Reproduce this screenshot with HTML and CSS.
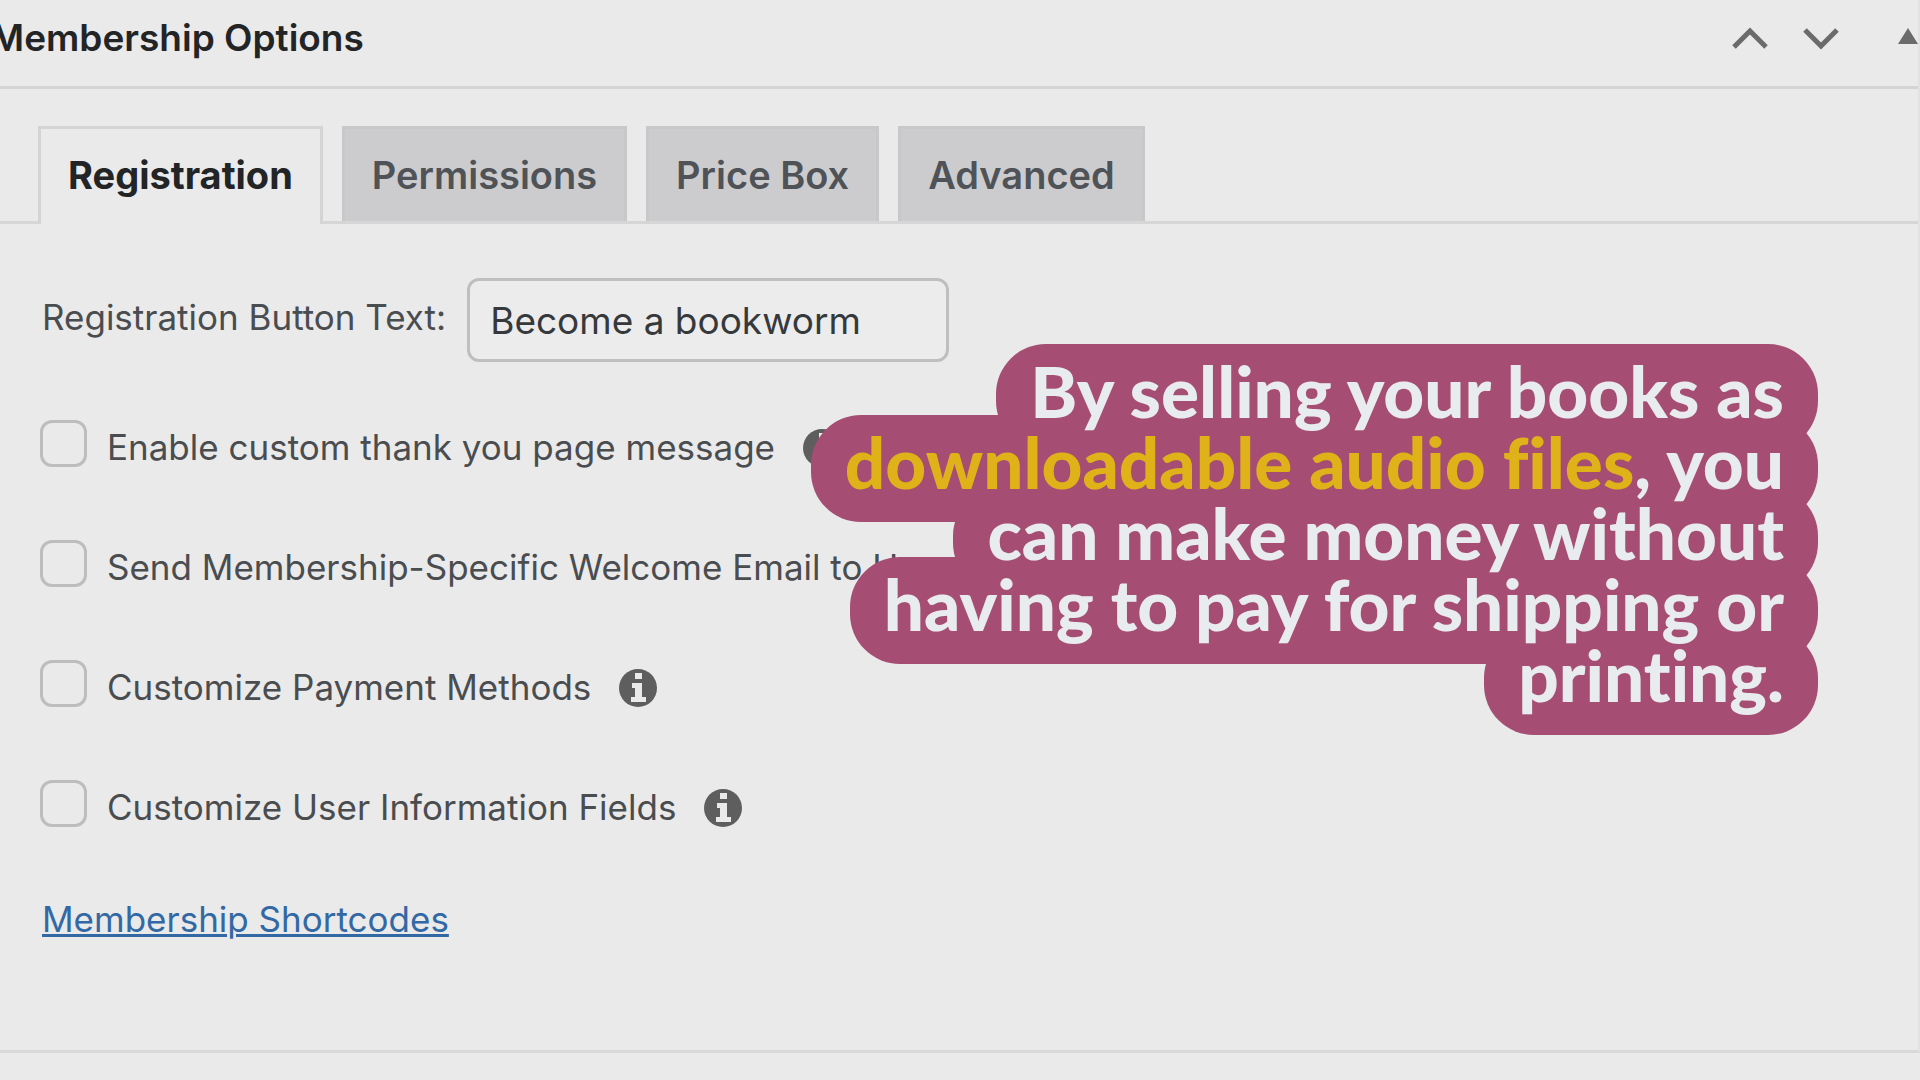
FILE: index.html
```html
<!DOCTYPE html>
<html lang="en">
<head>
    <meta charset="utf-8">
    <title>Membership Options</title>
    <link rel="stylesheet" href="styles.css">
</head>
<body>
    <main class="postbox">
        <header class="postbox-header">
            <h2>Membership Options</h2>
            <div class="handle-actions">
                <button type="button" class="handle" aria-label="Move up">
                    <svg width="40" height="28" viewBox="0 0 40 28"><path d="M5 24 L21 8 L37 24" fill="none" stroke="#6b6b6b" stroke-width="5"/></svg>
                </button>
                <button type="button" class="handle" aria-label="Move down">
                    <svg width="40" height="28" viewBox="0 0 40 28"><path d="M5 7 L21 23 L37 7" fill="none" stroke="#6b6b6b" stroke-width="5"/></svg>
                </button>
                <button type="button" class="handle toggle" aria-label="Toggle panel">
                    <svg width="20" height="28" viewBox="0 0 20 28"><path d="M10 5 L20 21 H0 Z" fill="#6b6b6b"/></svg>
                </button>
            </div>
        </header>

        <nav class="tabs">
            <button type="button" class="tab active">Registration</button>
            <button type="button" class="tab">Permissions</button>
            <button type="button" class="tab">Price Box</button>
            <button type="button" class="tab">Advanced</button>
        </nav>

        <form class="panel">
            <div class="field">
                <label for="buttonText">Registration Button Text:</label>
                <input type="text" id="buttonText" value="Become a bookworm">
            </div>

            <div class="option">
                <input type="checkbox" id="thankYou">
                <label for="thankYou">Enable custom thank you page message</label>
                <svg class="info" viewBox="0 0 38 38"><circle cx="19" cy="19" r="19" fill="#5e5e5e"/><path d="M16 4h7v6h-7z M13 14h10v14h4v5H12v-5h4v-9h-3z" fill="#eaeaea"/></svg>
            </div>
            <div class="option">
                <input type="checkbox" id="welcomeEmail">
                <label for="welcomeEmail">Send Membership-Specific Welcome Email to User</label>
                <svg class="info" viewBox="0 0 38 38"><circle cx="19" cy="19" r="19" fill="#5e5e5e"/><path d="M16 4h7v6h-7z M13 14h10v14h4v5H12v-5h4v-9h-3z" fill="#eaeaea"/></svg>
            </div>
            <div class="option">
                <input type="checkbox" id="payment">
                <label for="payment">Customize Payment Methods</label>
                <svg class="info" viewBox="0 0 38 38"><circle cx="19" cy="19" r="19" fill="#5e5e5e"/><path d="M16 4h7v6h-7z M13 14h10v14h4v5H12v-5h4v-9h-3z" fill="#eaeaea"/></svg>
            </div>
            <div class="option">
                <input type="checkbox" id="userFields">
                <label for="userFields">Customize User Information Fields</label>
                <svg class="info" viewBox="0 0 38 38"><circle cx="19" cy="19" r="19" fill="#5e5e5e"/><path d="M16 4h7v6h-7z M13 14h10v14h4v5H12v-5h4v-9h-3z" fill="#eaeaea"/></svg>
            </div>

            <a class="shortcodes" href="#">Membership Shortcodes</a>
        </form>
    </main>

    <p class="caption"><span class="bubble"><span class="words">By selling your books as<br><em>downloadable audio files</em>, you<br>can make money without<br>having to pay for shipping or<br>printing.</span></span></p>
</body>
</html>
```
FILE: styles.css
```css
* {
    box-sizing: border-box;
}

body {
    margin: 0;
    background-color: #eaeaea;
    color: #4a4d50;
    font-family: Inter, "Liberation Sans", sans-serif;
    font-size: 35px;
    overflow: hidden;
}

button,
input {
    font: inherit;
    color: inherit;
}

.postbox {
    border-right: 2px solid #e2e2e2;
    border-bottom: 3px solid #d9d9d9;
}

.postbox-header {
    display: flex;
    justify-content: space-between;
    align-items: center;
    height: 89px;
    padding-bottom: 12px;
    border-bottom: 3px solid #d4d4d4;
}

.postbox-header h2 {
    margin: 0 0 0 -10px;
    color: #222426;
    font-size: 37px;
    font-weight: 600;
}

.handle-actions {
    display: flex;
    gap: 31px;
}

.handle {
    display: flex;
    padding: 0;
    border: 0;
    background: none;
    cursor: pointer;
}

.toggle {
    margin-left: 27px;
}

.tabs {
    display: flex;
    gap: 19px;
    margin-top: 37px;
    padding-left: 38px;
    border-bottom: 3px solid #d6d6d6;
}

.tab {
    height: 95px;
    padding: 0 27px;
    border: 3px solid #c8c8ca;
    border-bottom: 0;
    background-color: #cccccf;
    color: #4f5357;
    font-size: 38px;
    font-weight: 600;
    cursor: pointer;
}

.tab.active {
    height: 98px;
    margin-bottom: -3px;
    padding-bottom: 3px;
    border-color: #d4d4d4;
    background-color: #eaeaea;
    color: #222426;
    font-weight: 700;
}

.panel {
    padding: 54px 42px 110px;
}

.field {
    display: flex;
    align-items: center;
    gap: 21px;
    margin-bottom: 21px;
}

.field label {
    padding-bottom: 6px;
}

.field input {
    width: 482px;
    height: 84px;
    padding: 0 20px;
    border: 3px solid #bfbfbf;
    border-radius: 12px;
    background-color: #ececec;
    color: #36393c;
    font-size: 37px;
}

.option {
    display: flex;
    align-items: center;
    height: 120px;
    margin-left: -2px;
    white-space: nowrap;
}

.option label {
    padding-top: 8px;
}

.option input {
    appearance: none;
    width: 47px;
    height: 47px;
    margin: 0 20px 0 0;
    border: 3px solid #bdbdbd;
    border-radius: 12px;
}

.info {
    width: 38px;
    height: 38px;
    margin: 10px 0 0 28px;
}

.shortcodes {
    display: inline-block;
    margin-top: 35px;
    color: #3269a5;
    text-decoration-thickness: 3px;
}

/* text bubble over the settings box */
.caption {
    position: absolute;
    top: 355px;
    right: 102px;
    margin: 0;
    color: #e9ecee;
    font-family: Lato, "Open Sans", sans-serif;
    font-size: 71px;
    font-weight: 900;
    font-variant-ligatures: none;
    line-height: 71px;
    text-align: right;
    white-space: nowrap;
}

.bubble {
    padding: 4px 34px 18px;
    border-radius: 50px;
    background-color: #a54d73;
    -webkit-box-decoration-break: clone;
    box-decoration-break: clone;
}

.words {
    position: relative;
}

.words em {
    color: #deb218;
    font-style: normal;
}
```
